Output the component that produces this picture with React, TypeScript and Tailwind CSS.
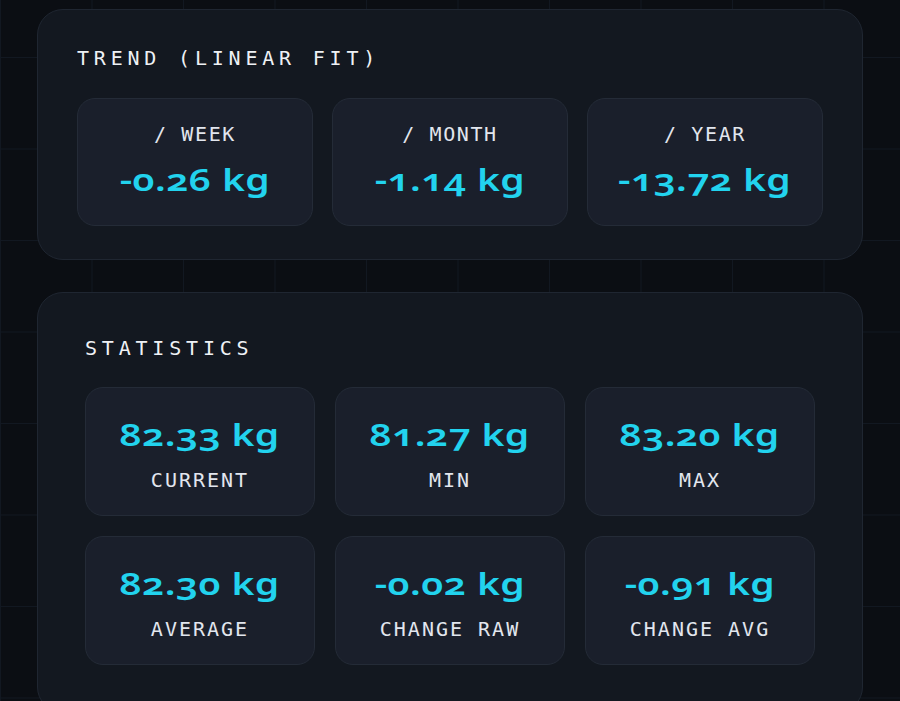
import React from "react";

const mono = "font-['DejaVu_Sans_Mono','Liberation_Mono',monospace]";
const num = "font-['Noto_Sans','DejaVu_Sans',sans-serif]";

function Value({ value }: { value: string }) {
  return (
    <div className={`${num} inline-block scale-x-[1.3] whitespace-nowrap text-[30px] font-semibold leading-none tracking-[0.01em] text-[#22d3ee] oldstyle-nums`}>
      {value}
    </div>
  );
}

function TrendCard({ label, value }: { label: string; value: string }) {
  return (
    <div className="flex h-[128px] flex-col items-center justify-center rounded-[18px] border border-[#242b37] bg-[#1a1f2b] pb-[4px]">
      <div className={`${mono} text-[20px] leading-none tracking-[0.08em] text-[#e2e6ee]`}>{label}</div>
      <div className="mt-[21px]">
        <Value value={value} />
      </div>
    </div>
  );
}

function StatCard({ label, value }: { label: string; value: string }) {
  return (
    <div className="flex h-[129px] flex-col items-center justify-center rounded-[18px] border border-[#242b37] bg-[#1a1f2b] pt-[7px]">
      <Value value={value} />
      <div className={`${mono} mt-[20px] text-[20px] leading-none tracking-[0.1em] text-[#e2e6ee]`}>{label}</div>
    </div>
  );
}

export default function App() {
  return (
    <div className="min-h-[701px] w-full overflow-hidden bg-[#0b0e13] bg-[linear-gradient(to_right,#121821_1px,transparent_1px),linear-gradient(to_bottom,#121821_1px,transparent_1px)] bg-[size:91.5px_91.5px] bg-[position:0px_57px]">
      <div className="flex flex-col gap-[32px] px-[37px] pt-[9px]">
        <section className="rounded-[26px] border border-[#1f2631] bg-[#131820] px-[39px] pb-[33px] pt-[38px]">
          <h2 className={`${mono} text-[20px] font-normal leading-none tracking-[0.24em] text-[#eef1f5]`}>TREND (LINEAR FIT)</h2>
          <div className="mt-[30px] grid grid-cols-3 gap-[19px]">
            <TrendCard label="/ WEEK" value="-0.26 kg" />
            <TrendCard label="/ MONTH" value="-1.14 kg" />
            <TrendCard label="/ YEAR" value="-13.72 kg" />
          </div>
        </section>
        <section className="rounded-[26px] border border-[#1f2631] bg-[#131820] px-[47px] pb-[47px] pt-[45px]">
          <h2 className={`${mono} text-[20px] font-normal leading-none tracking-[0.24em] text-[#eef1f5]`}>STATISTICS</h2>
          <div className="mt-[29px] grid grid-cols-3 gap-[20px]">
            <StatCard label="CURRENT" value="82.33 kg" />
            <StatCard label="MIN" value="81.27 kg" />
            <StatCard label="MAX" value="83.20 kg" />
            <StatCard label="AVERAGE" value="82.30 kg" />
            <StatCard label="CHANGE RAW" value="-0.02 kg" />
            <StatCard label="CHANGE AVG" value="-0.91 kg" />
          </div>
        </section>
      </div>
    </div>
  );
}
